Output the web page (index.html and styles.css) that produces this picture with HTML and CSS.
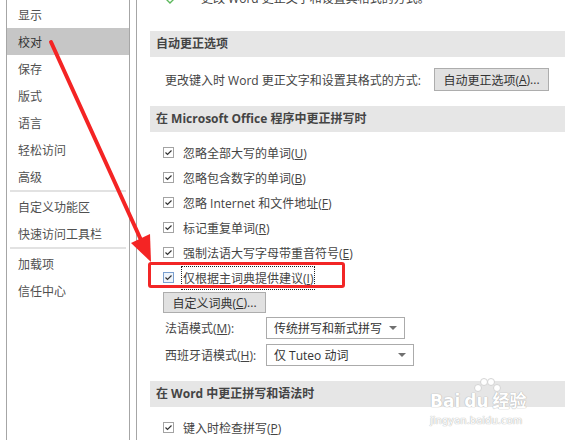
FILE: index.html
```html
<!DOCTYPE html>
<html lang="zh-CN">
<head>
  <meta charset="UTF-8" />
  <title>Word 选项 - 校对</title>
  <link rel="stylesheet" href="styles.css">
</head>
<body>
  <div class="window">
    <div class="nav">
      <div class="nav-item">显示</div>
      <div class="nav-item active">校对</div>
      <div class="nav-item">保存</div>
      <div class="nav-item">版式</div>
      <div class="nav-item">语言</div>
      <div class="nav-item">轻松访问</div>
      <div class="nav-item">高级</div>
      <div class="nav-sep"></div>
      <div class="nav-item">自定义功能区</div>
      <div class="nav-item">快速访问工具栏</div>
      <div class="nav-sep"></div>
      <div class="nav-item">加载项</div>
      <div class="nav-item">信任中心</div>
    </div>

    <div class="content">
      <div class="intro">
        <svg class="intro-check" width="22" height="22" viewBox="0 0 22 22">
          <polyline points="2,8 9,15 20,4" fill="none" stroke="#5cb85c" stroke-width="1.4" />
        </svg>
        <span>更改 Word 更正文字和设置其格式的方式。</span>
      </div>

      <div class="section-title first">自动更正选项</div>
      <div class="row autocorrect">
        <span class="row-label">更改键入时 Word 更正文字和设置其格式的方式:</span>
        <div class="btn btn-autocorrect">自动更正选项(<u>A</u>)...</div>
      </div>

      <div class="section-title">在 Microsoft Office 程序中更正拼写时</div>
      <div class="checks">
        <div class="check-row"><span class="box"><svg width="9" height="9" viewBox="0 0 9 9"><polyline points="1.5,4.5 3.5,6.5 7.5,2.5" fill="none" stroke="#333" stroke-width="1.2"/></svg></span><span>忽略全部大写的单词(<u>U</u>)</span></div>
        <div class="check-row"><span class="box"><svg width="9" height="9" viewBox="0 0 9 9"><polyline points="1.5,4.5 3.5,6.5 7.5,2.5" fill="none" stroke="#333" stroke-width="1.2"/></svg></span><span>忽略包含数字的单词(<u>B</u>)</span></div>
        <div class="check-row"><span class="box"><svg width="9" height="9" viewBox="0 0 9 9"><polyline points="1.5,4.5 3.5,6.5 7.5,2.5" fill="none" stroke="#333" stroke-width="1.2"/></svg></span><span>忽略 Internet 和文件地址(<u>F</u>)</span></div>
        <div class="check-row"><span class="box"><svg width="9" height="9" viewBox="0 0 9 9"><polyline points="1.5,4.5 3.5,6.5 7.5,2.5" fill="none" stroke="#333" stroke-width="1.2"/></svg></span><span>标记重复单词(<u>R</u>)</span></div>
        <div class="check-row"><span class="box"><svg width="9" height="9" viewBox="0 0 9 9"><polyline points="1.5,4.5 3.5,6.5 7.5,2.5" fill="none" stroke="#333" stroke-width="1.2"/></svg></span><span>强制法语大写字母带重音符号(<u>E</u>)</span></div>
        <div class="check-row"><span class="box focus"><svg width="9" height="9" viewBox="0 0 9 9"><polyline points="1.5,4.5 3.5,6.5 7.5,2.5" fill="none" stroke="#333" stroke-width="1.2"/></svg></span><span class="focus-label">仅根据主词典提供建议(<u>I</u>)</span></div>
      </div>

      <div class="btn btn-dict">自定义词典(<u>C</u>)...</div>

      <div class="select-row">
        <span class="select-label">法语模式(<u>M</u>):</span>
        <div class="select select-fr"><span>传统拼写和新式拼写</span><i class="caret"></i></div>
      </div>
      <div class="select-row">
        <span class="select-label">西班牙语模式(<u>H</u>):</span>
        <div class="select select-es"><span>仅 Tuteo 动词</span><i class="caret"></i></div>
      </div>

      <div class="section-title">在 Word 中更正拼写和语法时</div>
      <div class="checks last">
        <div class="check-row"><span class="box"><svg width="9" height="9" viewBox="0 0 9 9"><polyline points="1.5,4.5 3.5,6.5 7.5,2.5" fill="none" stroke="#333" stroke-width="1.2"/></svg></span><span>键入时检查拼写(<u>P</u>)</span></div>
      </div>
    </div>
  </div>

  <!-- annotations drawn over the screenshot -->
  <div class="mark-box"></div>
  <svg class="arrow" width="565" height="440" viewBox="0 0 565 440">
    <line x1="51" y1="42" x2="141" y2="240" stroke="#f42424" stroke-width="4" stroke-linecap="round" />
    <polygon points="151,262 131,243 150,234" fill="#f42424" />
  </svg>

  <div class="watermark">
    <svg class="paw" width="34" height="20" viewBox="0 0 34 20">
      <circle cx="8" cy="12" r="3.5" fill="#fff" stroke="#d4d4d4" />
      <circle cx="14" cy="6" r="3.5" fill="#fff" stroke="#d4d4d4" />
      <circle cx="21" cy="6" r="3.5" fill="#fff" stroke="#d4d4d4" />
      <circle cx="27" cy="12" r="3.5" fill="#fff" stroke="#d4d4d4" />
    </svg>
    <div class="wm-logo">Bai<span class="wm-du">du</span>经验</div>
    <div class="wm-url">jingyan.baidu.com</div>
  </div>
</body>
</html>
```

FILE: styles.css
```css
html, body {
  margin: 0;
  padding: 0;
  width: 565px;
  height: 440px;
  overflow: hidden;
  background: #fff;
  font-family: 'Segoe UI', 'Open Sans', 'Noto Sans CJK SC', sans-serif;
  font-size: 12px;
  color: #444;
}
u { text-decoration: underline; }

.window {
  display: flex;
  height: 440px;
  padding-left: 6px;
}

/* Left navigation */
.nav {
  width: 122px;
  flex: 0 0 122px;
  border-left: 1px solid #a6a6a6;
  border-right: 1px solid #a6a6a6;
  padding-top: 1px;
}
.nav-item {
  height: 27px;
  line-height: 27px;
  padding-left: 11px;
  font-family: 'Noto Sans CJK SC', sans-serif;
  color: #505050;
}
.nav-item.active {
  background: #c6c6c6;
  color: #333;
}
.nav-sep {
  height: 2px;
  background: #e2e2e2;
  margin: 0 3px 1px 3px;
}

/* Right pane */
.content {
  flex: 1;
  margin-left: 6px;
  border-left: 1px solid #a6a6a6;
  padding-left: 13px;
  display: flex;
  flex-direction: column;
}
.intro {
  display: flex;
  align-items: center;
  height: 18px;
  margin-top: -11px;
  font-size: 12px;
  color: #444;
  white-space: nowrap;
}
.intro-check {
  margin-left: 11px;
  margin-right: 18px;
  position: relative;
  top: 1px;
}
.section-title {
  height: 26px;
  line-height: 26px;
  background: #e6e6e6;
  padding-left: 6px;
  font-weight: bold;
  color: #444;
  margin-top: 15px;
}
.section-title.first { margin-top: 24px; }

.row {
  display: flex;
  align-items: center;
}
.autocorrect {
  margin-top: 11px;
  padding-left: 15px;
  height: 23px;
}
.row-label { width: 269px; flex: 0 0 269px; white-space: nowrap; }

.btn {
  background: #e1e1e1;
  border: 1px solid #adadad;
  box-sizing: border-box;
  display: flex;
  align-items: center;
  justify-content: center;
  color: #333;
}
.btn-autocorrect { width: 115px; height: 23px; }
.btn-dict {
  width: 103px;
  height: 25px;
  margin-top: 2px;
  margin-left: 13px;
}

.checks {
  margin-top: 8px;
  padding-left: 13px;
}
.check-row {
  display: flex;
  align-items: center;
  height: 25px;
}
.box {
  width: 11px;
  height: 11px;
  box-sizing: border-box;
  border: 1px solid #a3a3a3;
  background: #fff;
  margin-right: 9px;
  display: flex;
  align-items: center;
  justify-content: center;
}
.box.focus {
  border-color: #7a9fcf;
  background: #eef4fb;
}
.focus-label {
  outline: 1px dotted #222;
  padding: 2px 1px;
  margin-left: -1px;
}
.checks.last { margin-top: 8px; }

.select-row {
  display: flex;
  align-items: center;
  margin-top: 4px;
  height: 22px;
  padding-left: 15px;
}
.select-row + .select-row { margin-top: 5px; }
.select-label { width: 101px; flex: 0 0 101px; }
.select {
  height: 22px;
  box-sizing: border-box;
  border: 1px solid #ababab;
  background: #fff;
  display: flex;
  align-items: center;
  justify-content: space-between;
  padding: 0 7px;
  color: #333;
}
.select-fr { width: 139px; }
.select-es { width: 148px; }
.caret {
  width: 0;
  height: 0;
  border-left: 4px solid transparent;
  border-right: 4px solid transparent;
  border-top: 4px solid #707070;
}

/* Annotations */
.mark-box {
  position: absolute;
  left: 148px;
  top: 262px;
  width: 191px;
  height: 20px;
  border: 3px solid #f22626;
  border-radius: 3px;
}
.arrow {
  position: absolute;
  left: 0;
  top: 0;
  pointer-events: none;
}
.watermark {
  position: absolute;
  left: 430px;
  top: 376px;
  width: 110px;
  color: #fff;
  white-space: nowrap;
  text-shadow: 0 0 1px #b0b0b0, 0 0 1px #b0b0b0;
}
.paw {
  position: absolute;
  left: 40px;
  top: 0;
}
.wm-logo {
  margin-top: 14px;
  font-family: 'DejaVu Sans', 'Noto Sans CJK SC', sans-serif;
  font-weight: bold;
  font-size: 17px;
  line-height: 22px;
}
.wm-du { margin: 0 4px; }
.wm-url {
  font-family: 'DejaVu Sans', sans-serif;
  font-size: 10px;
  line-height: 13px;
  margin-top: 2px;
}
```
